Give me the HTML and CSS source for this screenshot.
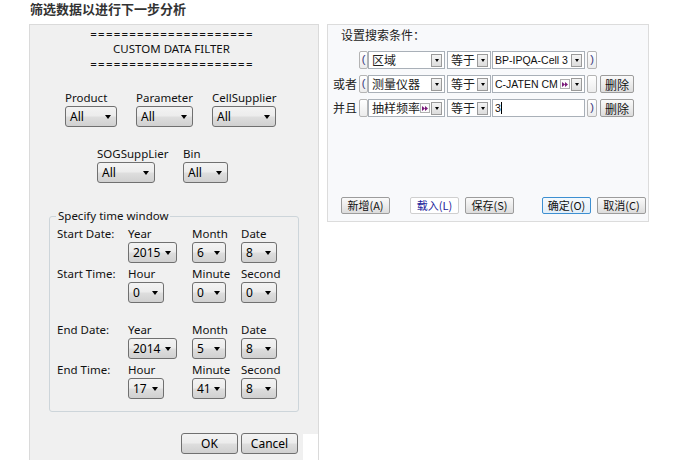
FILE: index.html
```html
<!DOCTYPE html>
<html>
<head>
<meta charset="utf-8">
<link rel="stylesheet" href="styles.css">
</head>
<body>
<div class="title">筛选数据以进行下一步分析</div>
<div class="main">
  <div class="filter">
    <div class="banner">
      <div class="eq">=====================</div>
      <div>CUSTOM DATA FILTER</div>
      <div class="eq">=====================</div>
    </div>
    <div class="frow frow1">
      <div class="field"><div class="lab">Product</div><div class="sel w52"><span>All</span></div></div>
      <div class="field"><div class="lab">Parameter</div><div class="sel w57"><span>All</span></div></div>
      <div class="field"><div class="lab">CellSupplier</div><div class="sel w64"><span>All</span></div></div>
    </div>
    <div class="frow frow2">
      <div class="field f-sog"><div class="lab">SOGSuppLier</div><div class="sel w58"><span>All</span></div></div>
      <div class="field"><div class="lab">Bin</div><div class="sel w45"><span>All</span></div></div>
    </div>
    <fieldset class="time">
      <legend>Specify time window</legend>
      <div class="trow">
        <div class="rlab">Start Date:</div>
        <div class="field"><div class="lab">Year</div><div class="sel w49"><span>2015</span></div></div>
        <div class="field"><div class="lab">Month</div><div class="sel w34"><span>6</span></div></div>
        <div class="field"><div class="lab">Date</div><div class="sel w36"><span>8</span></div></div>
      </div>
      <div class="trow">
        <div class="rlab">Start Time:</div>
        <div class="field"><div class="lab">Hour</div><div class="sel w36"><span>0</span></div></div>
        <div class="field"><div class="lab">Minute</div><div class="sel w34"><span>0</span></div></div>
        <div class="field"><div class="lab">Second</div><div class="sel w36"><span>0</span></div></div>
      </div>
      <div class="trow gap">
        <div class="rlab">End Date:</div>
        <div class="field"><div class="lab">Year</div><div class="sel w49"><span>2014</span></div></div>
        <div class="field"><div class="lab">Month</div><div class="sel w34"><span>5</span></div></div>
        <div class="field"><div class="lab">Date</div><div class="sel w36"><span>8</span></div></div>
      </div>
      <div class="trow">
        <div class="rlab">End Time:</div>
        <div class="field"><div class="lab">Hour</div><div class="sel w36"><span>17</span></div></div>
        <div class="field"><div class="lab">Minute</div><div class="sel w34"><span>41</span></div></div>
        <div class="field"><div class="lab">Second</div><div class="sel w36"><span>8</span></div></div>
      </div>
    </fieldset>
    <div class="actions">
      <button class="wbtn">OK</button>
      <button class="wbtn">Cancel</button>
    </div>
    <div class="clip"></div>
  </div>

  <div class="search">
    <div class="stitle">设置搜索条件：</div>
    <div class="srow">
      <span class="conj"></span>
      <span class="par">(</span>
      <span class="combo c-field"><span class="txt">区域</span><span class="dd"></span></span>
      <span class="combo c-op"><span class="txt">等于</span><span class="dd"></span></span>
      <span class="combo c-val"><span class="txt lat">BP-IPQA-Cell 3</span><span class="dd"></span></span>
      <span class="par">)</span>
    </div>
    <div class="srow">
      <span class="conj">或者</span>
      <span class="par">(</span>
      <span class="combo c-field"><span class="txt">测量仪器</span><span class="dd"></span></span>
      <span class="combo c-op"><span class="txt">等于</span><span class="dd"></span></span>
      <span class="combo c-val"><span class="txt lat">C-JATEN CM</span><span class="more"><svg width="8" height="7" viewBox="0 0 8 7"><path d="M1 1 L4 3.5 L1 6 Z M4 1 L7 3.5 L4 6 Z" fill="#7a1a7a"/></svg></span><span class="dd"></span></span>
      <span class="par"></span>
      <button class="sbtn del">删除</button>
    </div>
    <div class="srow">
      <span class="conj">并且</span>
      <span class="par"></span>
      <span class="combo c-field"><span class="txt">抽样频率</span><span class="more"><svg width="8" height="7" viewBox="0 0 8 7"><path d="M1 1 L4 3.5 L1 6 Z M4 1 L7 3.5 L4 6 Z" fill="#7a1a7a"/></svg></span><span class="dd"></span></span>
      <span class="combo c-op"><span class="txt">等于</span><span class="dd"></span></span>
      <span class="combo c-val input"><span class="txt lat">3</span><span class="caret"></span></span>
      <span class="par">)</span>
      <button class="sbtn del">删除</button>
    </div>
    <div class="sbtns">
      <button class="sbtn b-add">新增(A)</button>
      <button class="sbtn b-load">载入(L)</button>
      <button class="sbtn b-save">保存(S)</button>
      <button class="sbtn b-ok">确定(O)</button>
      <button class="sbtn b-cancel">取消(C)</button>
    </div>
  </div>
</div>
</body>
</html>
```

FILE: styles.css
```css
html, body {
  margin: 0;
  padding: 0;
}
body {
  width: 678px;
  height: 460px;
  overflow: hidden;
  background: #ffffff;
  font-family: "Noto Sans", "Noto Sans CJK SC", sans-serif;
  color: #1a1a1a;
}
.title {
  height: 24px;
  padding-left: 30px;
  font-family: "Noto Sans CJK SC", sans-serif;
  font-weight: bold;
  font-size: 13px;
  line-height: 17px;
  color: #333333;
}
.main {
  display: flex;
  align-items: flex-start;
  padding-left: 29px;
  gap: 8px;
}

/* ---------- left dialog ---------- */
.filter {
  position: relative;
  box-sizing: border-box;
  width: 290px;
  height: 440px;
  border: 1px solid #dadada;
  background: #f0f0f0;
  font-size: 11.5px;
}
.banner {
  padding-top: 1px;
  padding-right: 5px;
  text-align: center;
  line-height: 15px;
  color: #111;
}
.banner .eq {
  letter-spacing: 1.2px;
  padding-left: 1px;
}
.frow {
  display: flex;
}
.frow1 {
  margin-top: 20px;
  padding-left: 35px;
  gap: 19px;
}
.frow2 {
  margin-top: 20px;
  padding-left: 67px;
}
.f-sog {
  width: 86px;
}
.lab {
  height: 14px;
  line-height: 14px;
  white-space: nowrap;
  color: #111;
}
.sel {
  box-sizing: border-box;
  height: 21px;
  margin-top: 1px;
  display: flex;
  align-items: center;
  justify-content: space-between;
  padding: 0 5px 0 4px;
  border: 1px solid #707070;
  border-radius: 3px;
  background: linear-gradient(#f3f3f3 0%, #ececec 48%, #dedede 52%, #d0d0d0 100%);
  color: #000;
  font-size: 12px;
}
.sel::after {
  content: "";
  width: 0;
  height: 0;
  border-left: 3px solid transparent;
  border-right: 3px solid transparent;
  border-top: 4px solid #000;
}
.w34 { width: 34px; }
.w36 { width: 36px; }
.w45 { width: 45px; }
.w49 { width: 49px; }
.w52 { width: 52px; }
.w57 { width: 57px; }
.w58 { width: 58px; }
.w64 { width: 64px; }

.time {
  box-sizing: border-box;
  width: 250px;
  margin: 26px 0 0 19px;
  padding: 4px 0 12px 7px;
  border: 1px solid #cdd5da;
  border-radius: 3px;
  min-width: 0;
}
.time legend {
  margin-left: -1px;
  padding: 0 2px;
  line-height: 14px;
  color: #111;
}
.trow {
  display: grid;
  grid-template-columns: 71px 64px 49px auto;
  margin-bottom: 4px;
}
.trow.gap {
  margin-top: 20px;
}
.trow:last-child {
  margin-bottom: 0;
}
.rlab {
  line-height: 14px;
  white-space: nowrap;
  color: #111;
}
.actions {
  display: flex;
  justify-content: flex-end;
  gap: 3px;
  margin-top: 21px;
  padding-right: 20px;
}
.wbtn {
  box-sizing: border-box;
  width: 57px;
  height: 21px;
  padding: 0;
  border: 1px solid #707070;
  border-radius: 3px;
  background: linear-gradient(#f3f3f3 0%, #ececec 48%, #dedede 52%, #d0d0d0 100%);
  font-family: "Noto Sans", sans-serif;
  font-size: 12px;
  color: #000;
}
.clip {
  position: absolute;
  right: 0;
  bottom: 0;
  width: 15px;
  height: 29px;
  background: #ffffff;
}

/* ---------- right dialog ---------- */
.search {
  box-sizing: border-box;
  width: 322px;
  height: 198px;
  border: 1px solid #dcdcdc;
  background: #f8f9fb;
  display: flex;
  flex-direction: column;
  font-family: "Noto Sans CJK SC", sans-serif;
  font-size: 12px;
  color: #222;
}
.stitle {
  padding: 3px 0 0 13px;
  line-height: 14px;
  height: 14px;
}
.srow {
  display: flex;
  align-items: center;
  height: 18px;
  margin-top: 6px;
  padding-left: 5px;
}
.stitle + .srow {
  margin-top: 9px;
}
.conj {
  width: 26px;
  line-height: 18px;
  white-space: nowrap;
}
.par {
  box-sizing: border-box;
  width: 9px;
  height: 18px;
  border: 1px solid #b4b4b4;
  border-radius: 2px;
  background: linear-gradient(#ffffff, #ececec);
  line-height: 15px;
  font-size: 11px;
  color: #33337a;
  text-align: center;
  font-family: "Liberation Sans", sans-serif;
}
.srow .par:last-of-type {
  margin-left: 2px;
  width: 10px;
}
.combo {
  box-sizing: border-box;
  height: 18px;
  display: flex;
  align-items: center;
  border: 1px solid #a9b0b8;
  background: #ffffff;
  padding: 0 2px 0 3px;
}
.combo .txt {
  flex: 1;
  line-height: 16px;
  white-space: nowrap;
  overflow: hidden;
}
.combo .lat {
  font-family: "Liberation Sans", sans-serif;
  font-size: 10.5px;
  color: #111;
}
.c-field { width: 77px; }
.c-op { width: 44px; margin-left: 2px; }
.c-val { width: 93px; margin-left: 1px; padding-left: 2px; }
.dd {
  box-sizing: border-box;
  flex: none;
  width: 11px;
  height: 13px;
  border: 1px solid #9a9a9a;
  background: linear-gradient(#f4f4f4, #dcdcdc);
  display: flex;
  align-items: center;
  justify-content: center;
}
.dd::after {
  content: "";
  width: 0;
  height: 0;
  border-left: 2.5px solid transparent;
  border-right: 2.5px solid transparent;
  border-top: 3px solid #000;
}
.more {
  box-sizing: border-box;
  flex: none;
  width: 10px;
  height: 10px;
  margin-right: 1px;
  border: 1px solid #b0b0b0;
  background: #fbfbfb;
  display: flex;
  align-items: center;
  justify-content: center;
}
.more svg {
  display: block;
}
.input .txt {
  flex: none;
}
.caret {
  width: 1px;
  height: 12px;
  background: #000;
}
.sbtn {
  box-sizing: border-box;
  height: 18px;
  padding: 0;
  border: 1px solid #9c9c9c;
  border-radius: 2px;
  background: linear-gradient(#fafafa 0%, #ececec 50%, #dcdcdc 100%);
  font-family: "Noto Sans CJK SC", sans-serif;
  font-size: 11px;
  line-height: 15px;
  color: #111;
}
.del {
  width: 34px;
  margin-left: 3px;
  font-size: 12px;
}
.sbtns {
  margin-top: auto;
  margin-bottom: 7px;
  display: flex;
  align-items: center;
  padding-left: 13px;
}
.sbtns .sbtn {
  width: 49px;
  height: 17px;
}
.b-load {
  margin-left: 20px;
  background: #ffffff;
  border-color: #cfcfcf;
  color: #1b1b9a;
}
.b-save { margin-left: 6px; }
.b-ok {
  margin-left: 28px;
  border-color: #3d8fd1;
  background: linear-gradient(#f4f9fd, #e2eef8);
}
.b-cancel { margin-left: 6px; }
```
